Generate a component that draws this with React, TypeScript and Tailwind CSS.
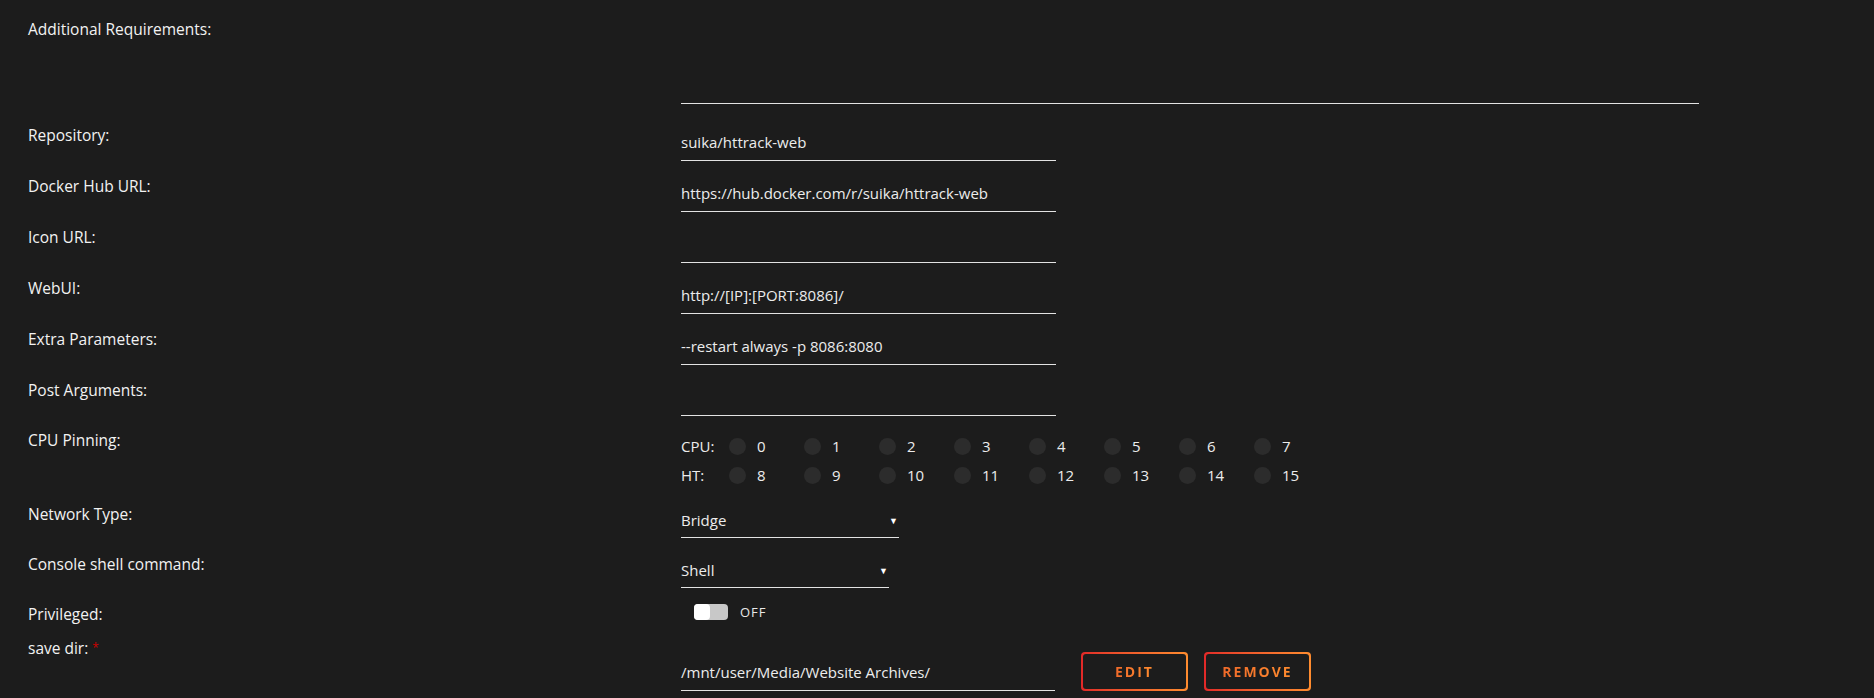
const font = { fontFamily: '"Open Sans", "Noto Sans", sans-serif' };

const Label = ({ children, className = '-mt-[2px]' }: { children: React.ReactNode; className?: string }) => (
	<div className={`w-[653px] shrink-0 text-[15.5px] leading-[20px] text-[#f2f2f2] ${className}`}>{children}</div>
);

const Field = ({ value = '', width = 'w-[375px]' }: { value?: string; width?: string }) => (
	<div className={`${width} h-[34px] pb-[3px] border-b border-[#e3e3e3] flex items-center text-[15px] text-[#ececec]`}>
		{value}
	</div>
);

const Select = ({ value, width }: { value: string; width: string }) => (
	<div className={`${width} h-[34px] border-b border-[#e3e3e3] flex items-center justify-between text-[15px] text-[#ececec]`}>
		<span>{value}</span>
		<span className="text-[9px] text-white pr-[1px]">▼</span>
	</div>
);

const GradButton = ({ children }: { children: React.ReactNode }) => (
	<div className="p-[2px] rounded-[4px] bg-gradient-to-r from-[#e22828] to-[#ff8c2f]">
		<button className="w-[103px] h-[35px] rounded-[3px] bg-[#1c1c1c] flex items-center justify-center">
			<span className="text-[14px] font-bold tracking-[2px] bg-gradient-to-r from-[#f06a2a] to-[#ff8c2f] bg-clip-text text-transparent">
				{children}
			</span>
		</button>
	</div>
);

export default function App() {
	const cpu = [0, 1, 2, 3, 4, 5, 6, 7];
	const ht = [8, 9, 10, 11, 12, 13, 14, 15];

	return (
		<div className="min-h-screen w-full bg-[#1c1c1c] pl-[28px] pt-[19px]" style={font}>
			{/* additional requirements */}
			<div className="flex h-[85px]">
				<Label className="">Additional Requirements:</Label>
				<div className="w-[1018px] h-[85px] border-b border-[#e3e3e3]" />
			</div>

			<div className="flex flex-col gap-[17px] mt-[23px]">
				<div className="flex">
					<Label>Repository:</Label>
					<Field value="suika/httrack-web" />
				</div>
				<div className="flex">
					<Label>Docker Hub URL:</Label>
					<Field value="https://hub.docker.com/r/suika/httrack-web" />
				</div>
				<div className="flex">
					<Label>Icon URL:</Label>
					<Field />
				</div>
				<div className="flex">
					<Label>WebUI:</Label>
					<Field value="http://[IP]:[PORT:8086]/" />
				</div>
				<div className="flex">
					<Label>Extra Parameters:</Label>
					<Field value="--restart always -p 8086:8080" />
				</div>
				<div className="flex">
					<Label>Post Arguments:</Label>
					<Field />
				</div>
			</div>

			{/* cpu pinning */}
			<div className="flex mt-[16px]">
				<Label>CPU Pinning:</Label>
				<div className="flex flex-col gap-[9px] pt-[4px] text-[15px] leading-[20px] text-[#ececec]">
					{[
						['CPU:', cpu],
						['HT:', ht],
					].map(([name, list]) => (
						<div key={name as string} className="flex items-center">
							<span className="w-[48px]">{name as string}</span>
							{(list as number[]).map((n) => (
								<div key={n} className="w-[75px] flex items-center gap-[11px]">
									<span className="w-[17px] h-[17px] rounded-full bg-[#2c2c2c]" />
									<span>{n}</span>
								</div>
							))}
						</div>
					))}
				</div>
			</div>

			<div className="flex mt-[19px]">
				<Label className="">Network Type:</Label>
				<Select value="Bridge" width="w-[218px]" />
			</div>

			<div className="flex mt-[16px]">
				<Label className="">Console shell command:</Label>
				<Select value="Shell" width="w-[208px]" />
			</div>

			<div className="flex mt-[16px] h-[36px]">
				<Label className="">Privileged:</Label>
				<div className="flex items-start gap-[12px] pl-[13px] pt-[0px]">
					<div className="relative w-[34px] h-[16px] rounded-[4px] bg-[#c8c8c8]">
						<span className="absolute left-0 top-0 w-[16px] h-[16px] rounded-[4px] bg-white" />
					</div>
					<span className="text-[13px] leading-[16px] font-medium tracking-[1px] text-[#e8e8e8]">OFF</span>
				</div>
			</div>

			<div className="flex">
				<Label>
					save dir: <span className="text-[#cc0000] text-[12px] align-top">*</span>
				</Label>
				<div className="flex items-end gap-[26px] pt-[12px]">
					<Field value="/mnt/user/Media/Website Archives/" width="w-[374px]" />
					<div className="flex gap-[16px]">
						<GradButton>EDIT</GradButton>
						<GradButton>REMOVE</GradButton>
					</div>
				</div>
			</div>
		</div>
	);
}
